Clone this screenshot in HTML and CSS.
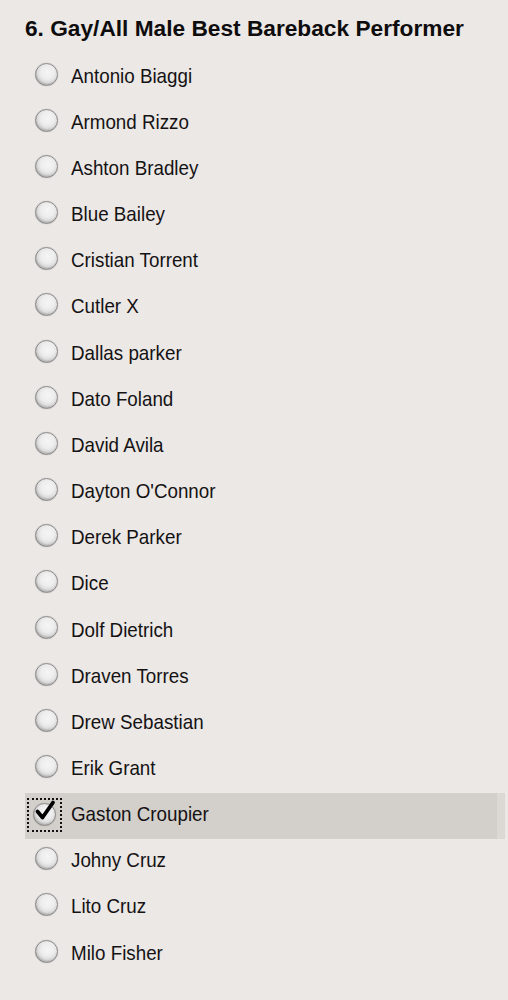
FILE: index.html
```html
<!DOCTYPE html>
<html>
<head>
<meta charset="utf-8">
<link rel="stylesheet" href="styles.css">
</head>
<body>
<div class="poll">
  <h2 class="title">6. Gay/All Male Best Bareback Performer</h2>
  <ul class="options">
    <li class="opt"><span class="radio"></span><span class="label">Antonio Biaggi</span></li>
    <li class="opt"><span class="radio"></span><span class="label">Armond Rizzo</span></li>
    <li class="opt"><span class="radio"></span><span class="label">Ashton Bradley</span></li>
    <li class="opt"><span class="radio"></span><span class="label">Blue Bailey</span></li>
    <li class="opt"><span class="radio"></span><span class="label">Cristian Torrent</span></li>
    <li class="opt"><span class="radio"></span><span class="label">Cutler X</span></li>
    <li class="opt"><span class="radio"></span><span class="label">Dallas parker</span></li>
    <li class="opt"><span class="radio"></span><span class="label">Dato Foland</span></li>
    <li class="opt"><span class="radio"></span><span class="label">David Avila</span></li>
    <li class="opt"><span class="radio"></span><span class="label">Dayton O'Connor</span></li>
    <li class="opt"><span class="radio"></span><span class="label">Derek Parker</span></li>
    <li class="opt"><span class="radio"></span><span class="label">Dice</span></li>
    <li class="opt"><span class="radio"></span><span class="label">Dolf Dietrich</span></li>
    <li class="opt"><span class="radio"></span><span class="label">Draven Torres</span></li>
    <li class="opt"><span class="radio"></span><span class="label">Drew Sebastian</span></li>
    <li class="opt"><span class="radio"></span><span class="label">Erik Grant</span></li>
    <li class="opt selected"><span class="focus"><span class="radio checked"><svg viewBox="0 0 24 24" width="24" height="24"><path d="M4.5 12.5 L9.5 18.5 L20 3.5" fill="none" stroke="#000" stroke-width="3.8" stroke-linecap="round" stroke-linejoin="round"/></svg></span></span><span class="label">Gaston Croupier</span></li>
    <li class="opt"><span class="radio"></span><span class="label">Johny Cruz</span></li>
    <li class="opt"><span class="radio"></span><span class="label">Lito Cruz</span></li>
    <li class="opt"><span class="radio"></span><span class="label">Milo Fisher</span></li>
  </ul>
</div>
</body>
</html>
```

FILE: styles.css
```css
html, body {
  margin: 0;
  padding: 0;
  background: #ebe8e5;
}
.poll {
  padding: 0 3px 0 25px;
  font-family: "Liberation Sans", Arial, sans-serif;
  color: #151214;
}
.title {
  margin: 0;
  height: 54px;
  display: flex;
  align-items: center;
  padding-top: 3px;
  box-sizing: border-box;
  font-size: 22.7px;
  font-weight: bold;
  color: #0e0c0d;
}
.options {
  list-style: none;
  margin: 0;
  padding: 0;
}
.opt {
  height: 46.16px;
  display: flex;
  align-items: center;
  padding-left: 10px;
  box-sizing: border-box;
}
.opt.selected {
  background: #d3cfca;
  border-right: 8px solid #dcd8d3;
  padding-left: 2px;
}
.radio {
  width: 23px;
  height: 23px;
  border-radius: 50%;
  flex: none;
  position: relative;
  box-sizing: border-box;
  margin-bottom: 6px;
  border: 1.5px solid #8c8a8a;
  background: radial-gradient(circle at 55% 40%, #f6f5f5 0, #eeeded 40%, #dddcdc 58%, #b3b2b2 72%, #9a9999 84%, #c4c3c3 100%);
  box-shadow: 0 0 1px rgba(0,0,0,0.25);
}
.focus {
  width: 35px;
  height: 34px;
  border: 2px dotted #111;
  box-sizing: border-box;
  display: flex;
  align-items: center;
  justify-content: center;
  flex: none;
  margin-bottom: 2px;
}
.focus .radio {
  margin-bottom: 0;
}
.radio.checked svg {
  position: absolute;
  left: -1px;
  top: -5px;
}
.label {
  margin-left: 13px;
  font-size: 18.8px;
  line-height: 1;
  white-space: nowrap;
  transform: scaleY(1.1);
  margin-bottom: 2px;
}
.selected .label {
  margin-left: 9px;
}
```
